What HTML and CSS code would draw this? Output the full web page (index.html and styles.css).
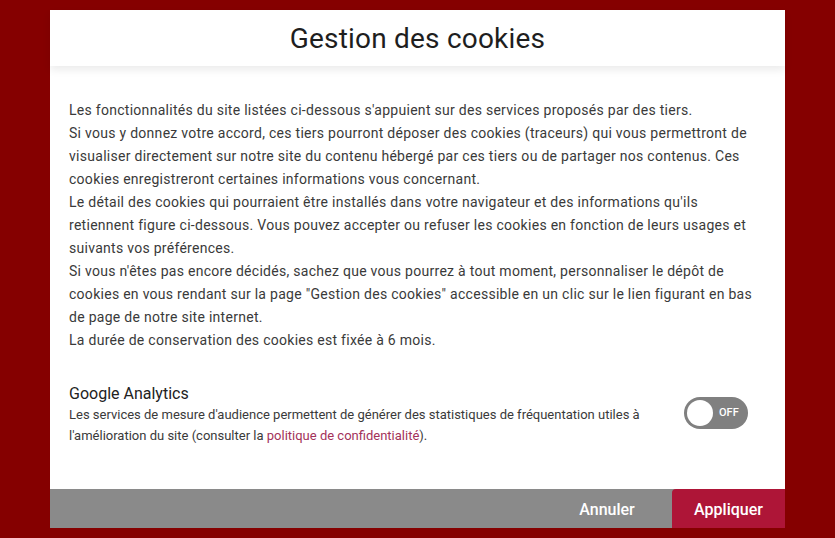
FILE: index.html
```html
<!DOCTYPE html>
<html lang="fr">
<head>
<meta charset="utf-8">
<title>Gestion des cookies</title>
<link rel="stylesheet" href="styles.css">
</head>
<body>
<div class="page">
  <div class="modal">
    <div class="modal-header">
      <h1 class="modal-title">Gestion des cookies</h1>
    </div>
    <div class="modal-body">
      <p class="intro">Les fonctionnalités du site listées ci-dessous s'appuient sur des services proposés par des tiers.<br>
Si vous y donnez votre accord, ces tiers pourront déposer des cookies (traceurs) qui vous permettront de<br>
visualiser directement sur notre site du contenu hébergé par ces tiers ou de partager nos contenus. Ces<br>
cookies enregistreront certaines informations vous concernant.<br>
Le détail des cookies qui pourraient être installés dans votre navigateur et des informations qu'ils<br>
retiennent figure ci-dessous. Vous pouvez accepter ou refuser les cookies en fonction de leurs usages et<br>
suivants vos préférences.<br>
Si vous n'êtes pas encore décidés, sachez que vous pourrez à tout moment, personnaliser le dépôt de<br>
cookies en vous rendant sur la page "Gestion des cookies" accessible en un clic sur le lien figurant en bas<br>
de page de notre site internet.<br>
La durée de conservation des cookies est fixée à 6 mois.</p>
      <div class="service">
        <div class="service-info">
          <h2 class="service-title">Google Analytics</h2>
          <p class="service-desc">Les services de mesure d'audience permettent de générer des statistiques de fréquentation utiles à<br>l'amélioration du site (consulter la <a class="link" href="#">politique de confidentialité</a>).</p>
        </div>
        <div class="toggle">
          <span class="knob"></span>
          <span class="toggle-label">OFF</span>
        </div>
      </div>
    </div>
    <div class="modal-footer">
      <button class="btn btn-cancel">Annuler</button>
      <button class="btn btn-apply">Appliquer</button>
    </div>
  </div>
</div>
</body>
</html>
```

FILE: styles.css
```css
* { box-sizing: border-box; }
html, body {
  margin: 0;
  padding: 0;
  height: 100%;
}
body {
  background: #850000;
  font-family: Roboto, "Liberation Sans", Arial, sans-serif;
  color: #3a3a3a;
}
.page {
  height: 538px;
  padding: 10px 50px 10px 50px;
}
.modal {
  width: 735px;
  height: 518px;
  background: #ffffff;
  display: flex;
  flex-direction: column;
}
.modal-header {
  height: 56px;
  display: flex;
  align-items: center;
  justify-content: center;
  box-shadow: 0 4px 8px rgba(0, 0, 0, 0.08);
  position: relative;
  z-index: 1;
}
.modal-title {
  margin: 0;
  font-weight: 400;
  font-size: 28px;
  color: #1e1e1e;
  letter-spacing: 0.2px;
}
.modal-body {
  flex: 1;
  padding: 33px 19px 0 19px;
}
.intro {
  margin: 0;
  font-size: 14px;
  letter-spacing: 0.28px;
  line-height: 23px;
  color: #3a3a3a;
  white-space: nowrap;
}
.service {
  margin-top: 31px;
  display: flex;
  align-items: center;
  justify-content: space-between;
  padding-right: 18px;
}
.service-title {
  margin: 0;
  font-size: 16px;
  font-weight: 400;
  color: #222;
  line-height: 21px;
}
.service-desc {
  margin: 0;
  font-size: 13px;
  line-height: 21px;
  color: #3a3a3a;
  white-space: nowrap;
}
.link {
  color: #a3325a;
  text-decoration: none;
}
.toggle {
  width: 64px;
  height: 32px;
  border-radius: 16px;
  background: #808080;
  display: flex;
  align-items: center;
  padding: 0 0 0 3px;
  margin-top: -4px;
}
.knob {
  width: 26px;
  height: 26px;
  border-radius: 50%;
  background: #fff;
}
.toggle-label {
  color: #fff;
  font-size: 11px;
  font-weight: 500;
  margin-left: 6px;
}
.modal-footer {
  height: 39px;
  background: #8a8a8a;
  display: flex;
  justify-content: flex-end;
  align-items: stretch;
}
.btn {
  border: none;
  font-family: Roboto, "Liberation Sans", Arial, sans-serif;
  font-size: 16px;
  font-weight: 500;
  color: #fff;
  background: transparent;
  padding: 0;
  cursor: pointer;
}
.btn-cancel {
  width: 130px;
  text-align: center;
  padding-top: 1px;
}
.btn-apply {
  width: 113px;
  background: #ae1537;
  border-radius: 4px 0 0 0;
  padding-top: 1px;
}
```
